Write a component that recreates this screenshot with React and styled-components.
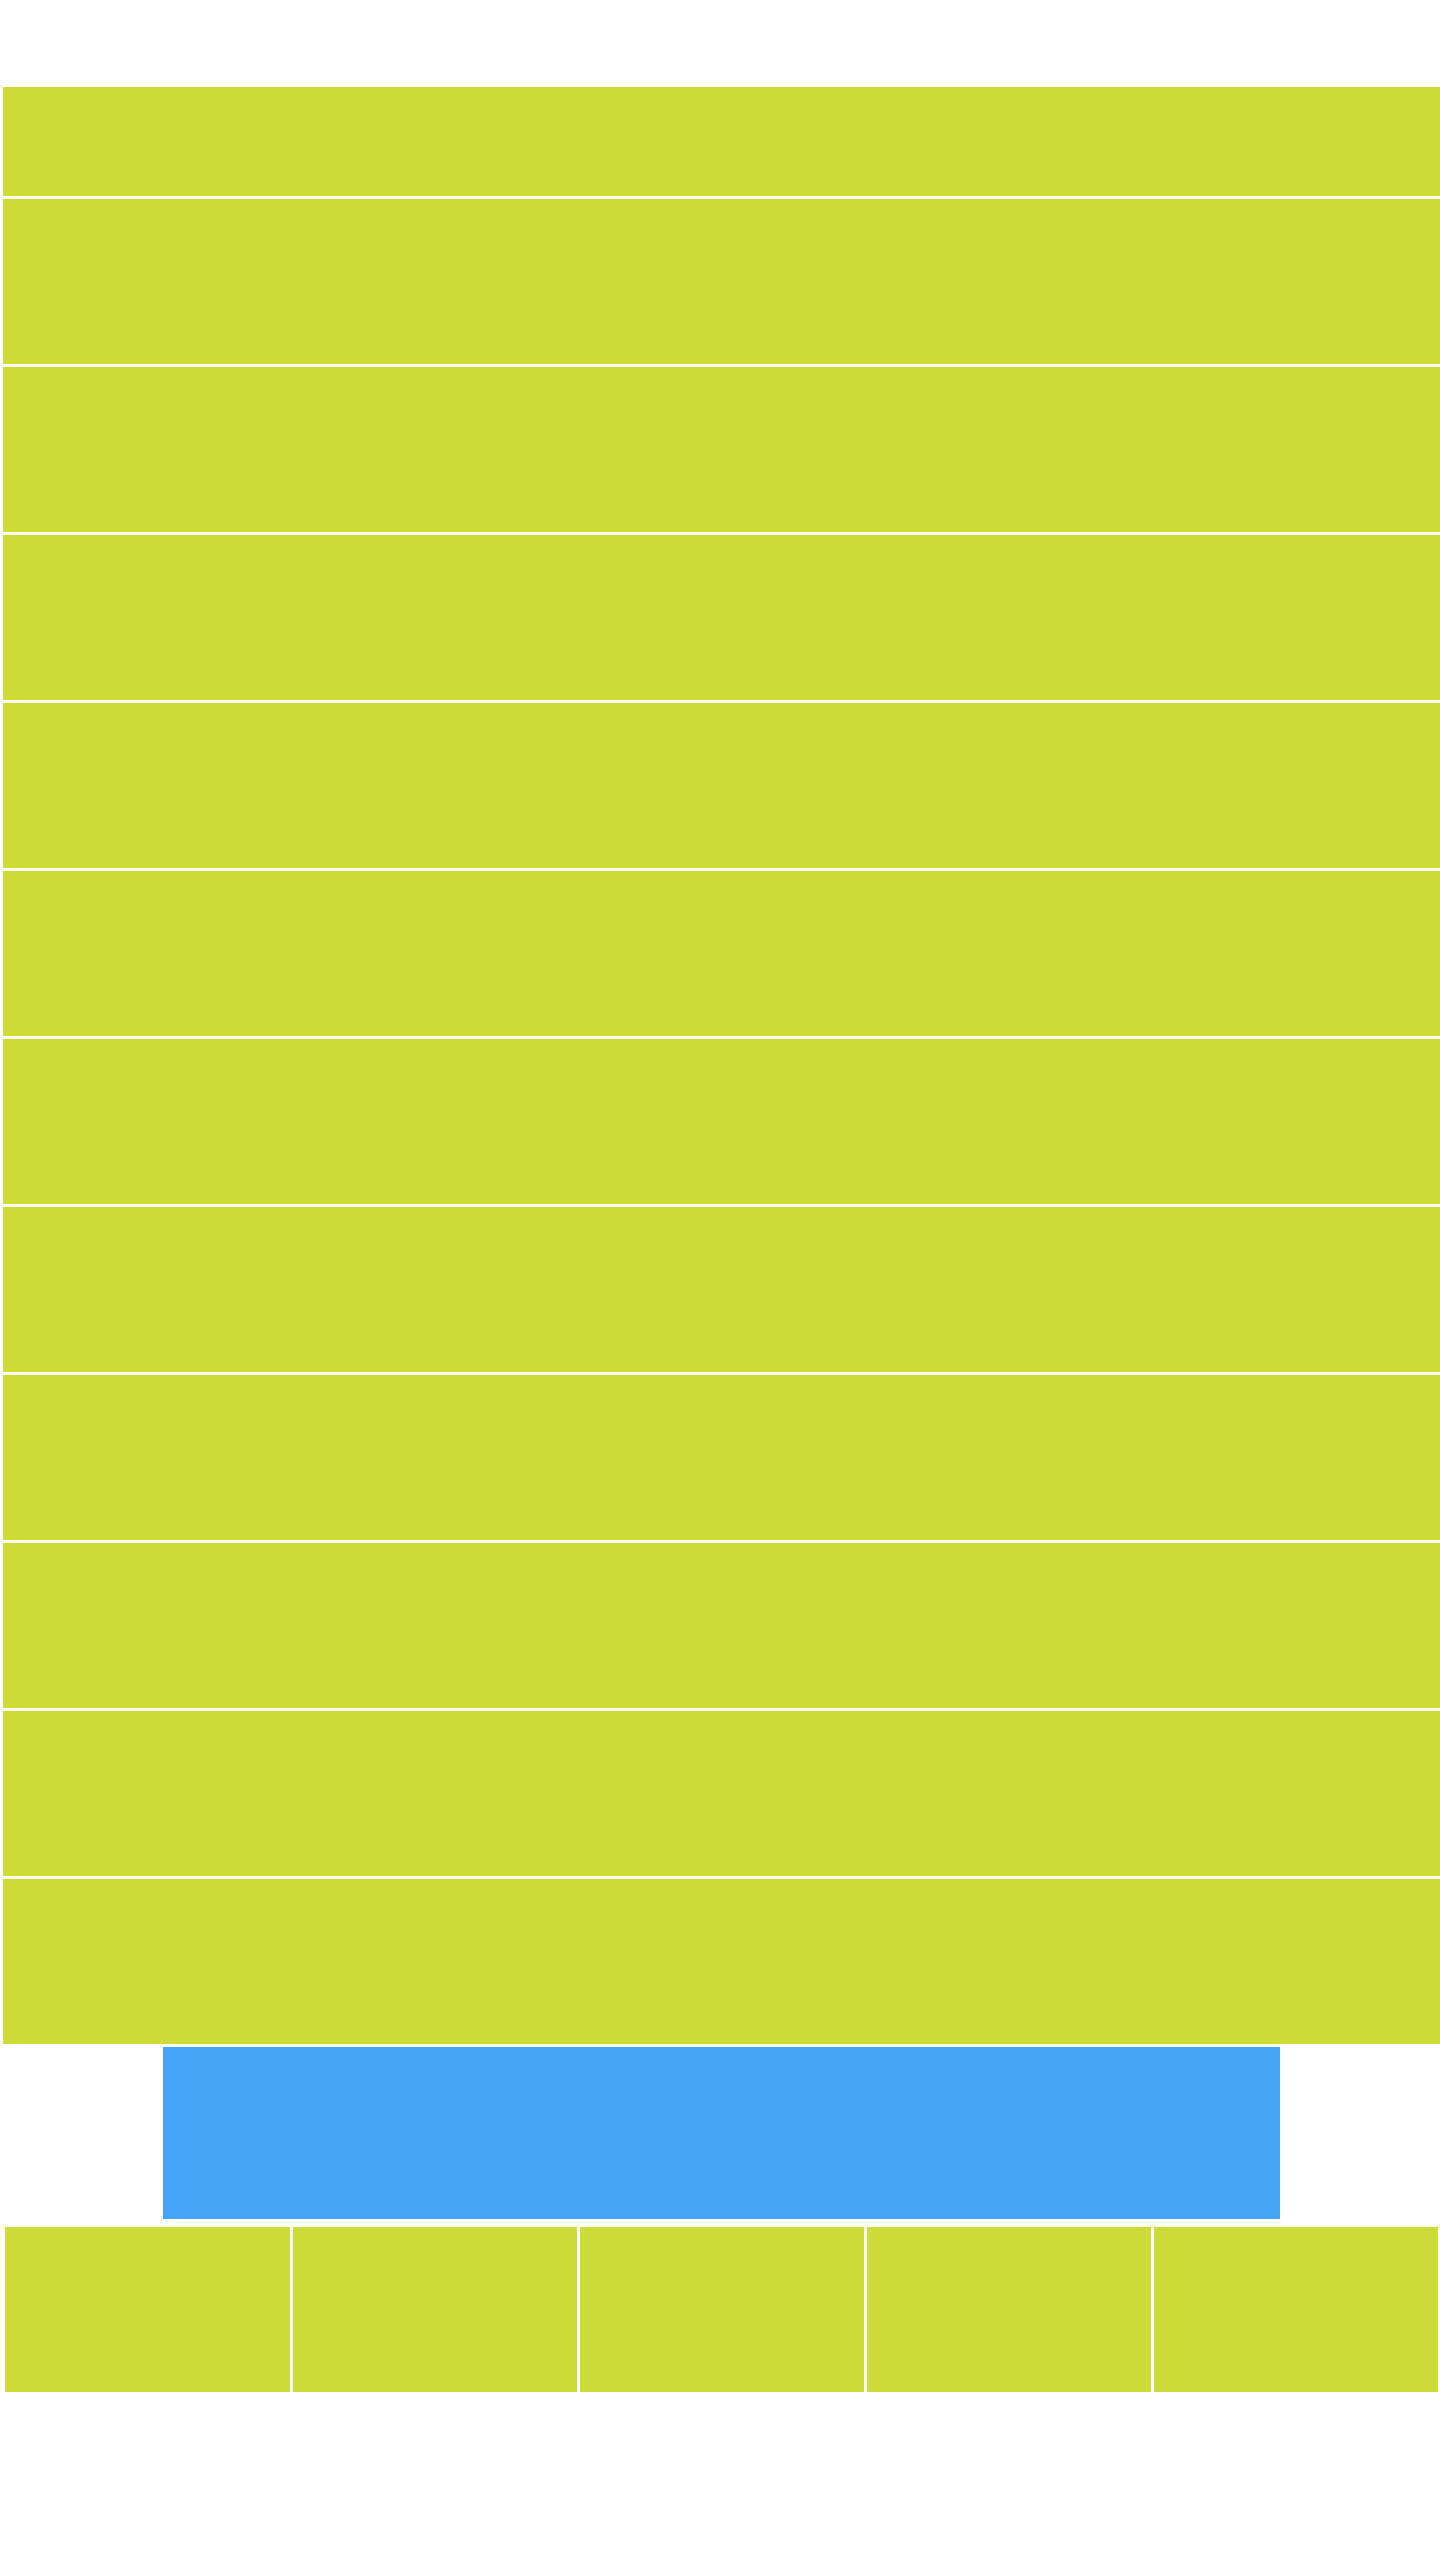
import React from "react";
import styled, { createGlobalStyle } from "styled-components";

const Global = createGlobalStyle`
  html, body { margin: 0; padding: 0; background: #ffffff; }
  body { font-family: "Liberation Sans", Arial, sans-serif; }
`;

const Page = styled.div`
  padding-top: 87px;
  width: 1440px;
  box-sizing: border-box;
`;

const Stack = styled.div`
  display: flex;
  flex-direction: column;
  gap: 3px;
  margin-left: 3px;
`;

const Band = styled.div`
  background: #cddc39;
  height: ${(p) => p.$h}px;
`;

const Banner = styled.div`
  background: #42a5f5;
  height: 172px;
  margin: 3px 160px 0 163px;
`;

const Tiles = styled.div`
  display: grid;
  grid-template-columns: 285px repeat(4, 1fr);
  gap: 3px;
  margin: 8px 2px 0 5px;
`;

const Tile = styled.div`
  background: #cddc39;
  height: 165px;
`;

const heights = [109, 165, 165, 165, 165, 165, 165, 165, 165, 165, 165, 165];

export default function App() {
  return (
    <>
      <Global />
      <Page>
        <Stack>
          {heights.map((h, i) => (
            <Band key={i} $h={h} />
          ))}
        </Stack>
        <Banner />
        <Tiles>
          {[0, 1, 2, 3, 4].map((i) => (
            <Tile key={i} />
          ))}
        </Tiles>
      </Page>
    </>
  );
}
